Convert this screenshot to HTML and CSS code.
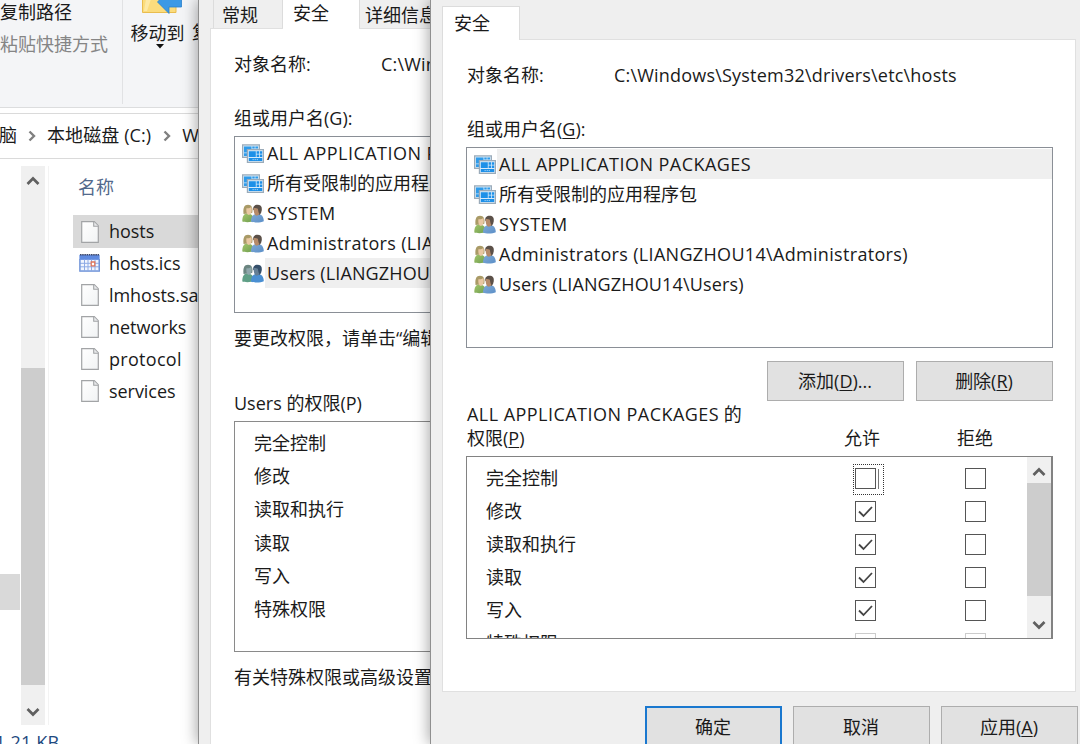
FILE: index.html
```html
<!DOCTYPE html>
<html lang="zh-CN">
<head>
<meta charset="utf-8">
<title>hosts 的权限</title>
<link rel="stylesheet" href="styles.css">
</head>
<body>
<svg width="0" height="0" class="defs">
  <defs>
    <linearGradient id="pg" x1="0" y1="0" x2="1" y2="1"><stop offset="0" stop-color="#fff"/><stop offset="1" stop-color="#f1f3f4"/></linearGradient>
    <linearGradient id="gr" x1="0" y1="0" x2="1" y2="1"><stop offset="0" stop-color="#a3c46a"/><stop offset="1" stop-color="#6f9f50"/></linearGradient>
    <linearGradient id="bl" x1="0" y1="0" x2="1" y2="1"><stop offset="0" stop-color="#7fa9d4"/><stop offset="1" stop-color="#5b8fc8"/></linearGradient>
  </defs>
  <symbol id="file" viewBox="0 0 18 22">
    <path d="M.7.7h12.6l4 4v16.6H.7z" fill="url(#pg)" stroke="#a2a4a6" stroke-width="1.2"/>
    <path d="M12.7 1v4.3H17" fill="#e8eaeb" stroke="#a2a4a6" stroke-width="1.1"/>
  </symbol>
  <symbol id="cal" viewBox="0 0 21 18">
    <path d="M.5 1h20v16.5H.5z" fill="#b9cdf2"/>
    <path d="M.5.8h20v5H.5z" fill="#5f8ae0"/>
    <path d="M1 .8h19" stroke="#3d4668" stroke-width="1.4" stroke-dasharray="1.5 .7"/>
    <path d="M2 6h17v10H2z" fill="#f1f5fe"/>
    <path d="M5.5 5.5v11M9 5.5v11M12.5 5.5v11M16 5.5v11M1 9.3h19M1 12.8h19" stroke="#8eabe5" stroke-width="1"/>
    <path d="M12.2 8h3.6v3.8h-3.6z" fill="#fff" stroke="#e0765a" stroke-width="1.3"/>
    <path d="M.8 5v12.2h19.6V5" fill="none" stroke="#7295d8" stroke-width="1.2"/>
  </symbol>
  <symbol id="pkg" viewBox="0 0 22 19">
    <path d="M.6.9h16.8v12.4H.6z" fill="#cfe6f8" stroke="#9babb9" stroke-width="1.2"/>
    <path d="M2 2.500h7.500v6H2zM2 9.300h5V12H2zM10.300 2.500h2.400v1.900h-2.400zM13.400 2.500h2.600v1.900h-2.600z" fill="#2f9bea"/>
    <path d="M5.4 5.6h16v12.7h-16z" fill="#d6eafa" stroke="#9babb9" stroke-width="1.2"/>
    <path d="M6.800 7.300h7v5.700h-7zM14.600 7.300h2.400v2.500h-2.400zM17.800 7.300h2.400v2.500h-2.400zM14.600 10.500H17V13h-2.400zM17.800 10.500h2.400V13h-2.400zM6.800 14h13.400v3.100H6.800z" fill="#1d90e8"/>
    <path d="M10.500 15.6h6" stroke="#b8dcf7" stroke-width=".8" stroke-dasharray="1.3 .8"/>
  </symbol>
  <symbol id="people" viewBox="0 0 22 19">
    <path d="M.3 17.500C.3 12 2 9.500 5.500 9.500s6.500 2 6.500 7.500c-2 1.300-9 1.500-11.700.5z" fill="url(#gr)"/>
    <path d="M1.500 10C.8 4 2.300.8 6 .8S11.200 4 10.200 9z" fill="#a99a66"/>
    <path d="M4.400 4.200c1.800.4 3.600-.2 5-1.200.8 3.600.3 7-2.400 8-2-.2-3-3.100-2.600-6.800z" fill="#e9c8a2"/>
    <path d="M9 17.600c0-4.600 2-7.600 6-7.600 4.700 0 6.800 2.600 6.800 7.200-3 1.700-9.800 1.800-12.800.4z" fill="url(#bl)"/>
    <path d="M11.200 5.500C10.800 2.200 12.800.7 15.500.7c3.200 0 4.800 1.900 4.200 5.700-.4 2.400-1.400 3.900-2.600 4.500z" fill="#5b5048"/>
    <path d="M11.700 4.200c1.500-.3 3 0 4.200.6.300 2 .6 3.800 1.400 5-.6 1.800-3.400 2.700-4.500.7-.9-1.700-1.300-4-1.100-6.300z" fill="#b58a69"/>
  </symbol>
  <symbol id="people-sel" viewBox="0 0 22 19">
    <path d="M.3 17.500C.3 12 2 9.500 5.500 9.500s6.500 2 6.500 7.500c-2 1.300-9 1.500-11.700.5z" fill="#5f9f86"/>
    <path d="M1.500 10C.8 4 2.300.8 6 .8S11.200 4 10.200 9z" fill="#6b8580"/>
    <path d="M4.400 4.200c1.800.4 3.600-.2 5-1.200.8 3.600.3 7-2.400 8-2-.2-3-3.100-2.600-6.800z" fill="#8fa7ab"/>
    <path d="M9 17.600c0-4.600 2-7.600 6-7.600 4.700 0 6.800 2.600 6.800 7.200-3 1.700-9.800 1.800-12.800.4z" fill="#4a8fd2"/>
    <path d="M11.200 5.500C10.800 2.200 12.800.7 15.500.7c3.200 0 4.800 1.900 4.200 5.700-.4 2.400-1.400 3.900-2.600 4.500z" fill="#35506b"/>
    <path d="M11.700 4.200c1.500-.3 3 0 4.200.6.300 2 .6 3.800 1.400 5-.6 1.800-3.400 2.700-4.500.7-.9-1.700-1.300-4-1.100-6.300z" fill="#647f96"/>
  </symbol>
  <symbol id="up" viewBox="0 0 14 10"><path d="M1.500 8 7 2.500 12.500 8" fill="none" stroke="#606060" stroke-width="2.700"/></symbol>
  <symbol id="down" viewBox="0 0 14 10"><path d="M1.500 2 7 7.500 12.500 2" fill="none" stroke="#606060" stroke-width="2.700"/></symbol>
  <symbol id="sep" viewBox="0 0 8 12"><path d="M1.500 1.500 6 6l-4.500 4.500" fill="none" stroke="#808080" stroke-width="2.400"/></symbol>
</svg>

<main class="desktop">
  <section class="explorer">
    <div class="ribbon">
      <div class="clip-group"><span>复制路径</span><span class="off">粘贴快捷方式</span></div>
      <div class="move-group">
        <svg class="move-icon" width="40" height="15" viewBox="0 0 40 15"><path d="M.5-1H34v13.500H.5z" fill="#fbdc7d" stroke="#e9bd4f"/><path d="M4-1h5L5 11H2z" fill="#fde9a5"/><path d="M15.500 2 27-10v4h12.500V7H27v6.500z" fill="#3b99e6" stroke="#2b80cc" stroke-width=".8"/></svg>
        <span>移动到</span>
        <svg width="8" height="5" viewBox="0 0 8 5"><path d="M0 0h8L4 4.500z" fill="#111"/></svg>
      </div>
      <span class="copy-to">复制到</span>
    </div>
    <div class="address"><span>脑</span><svg width="8" height="12"><use href="#sep"/></svg><span class="drive">本地磁盘 (C:)</span><svg width="8" height="12"><use href="#sep"/></svg><span>Windows</span></div>
    <div class="body">
      <div class="tree"><div class="tree-sel"></div></div>
      <div class="vbar tree-bar"><svg width="14" height="10"><use href="#up"/></svg><div class="thumb"></div><svg width="14" height="10"><use href="#down"/></svg></div>
      <div class="files">
        <div class="col-head">名称</div>
        <div class="file sel"><svg width="18" height="22"><use href="#file"/></svg><span>hosts</span></div>
        <div class="file"><svg class="wide" width="21" height="18"><use href="#cal"/></svg><span>hosts.ics</span></div>
        <div class="file"><svg width="18" height="22"><use href="#file"/></svg><span>lmhosts.sam</span></div>
        <div class="file"><svg width="18" height="22"><use href="#file"/></svg><span>networks</span></div>
        <div class="file"><svg width="18" height="22"><use href="#file"/></svg><span class="wider">protocol</span></div>
        <div class="file"><svg width="18" height="22"><use href="#file"/></svg><span>services</span></div>
      </div>
    </div>
    <div class="status"><span>1.21 KB</span></div>
  </section>

  <section class="win props">
    <div class="clip">
      <div class="tabs"><div class="tab">常规</div><div class="tab on">安全</div><div class="tab last">详细信息</div></div>
      <div class="page">
        <div class="object"><span>对象名称:</span><span class="path">C:\Windows</span></div>
        <div class="group-label">组或用户名(G):</div>
        <div class="list">
          <div class="item"><svg width="22" height="19"><use href="#pkg"/></svg><span class="caps">ALL APPLICATION PACKAGES</span></div>
          <div class="item"><svg width="22" height="19"><use href="#pkg"/></svg><span>所有受限制的应用程序包</span></div>
          <div class="item"><svg width="22" height="19"><use href="#people"/></svg><span class="caps">SYSTEM</span></div>
          <div class="item"><svg width="22" height="19"><use href="#people"/></svg><span class="name">Administrators (LIANGZHOU14)</span></div>
          <div class="item sel"><svg width="22" height="19"><use href="#people-sel"/></svg><span class="user">Users (LIANGZHOU14)</span></div>
        </div>
        <div class="hint">要更改权限，请单击“编辑”</div>
        <div class="perm-label">Users 的权限(P)</div>
        <div class="perms">
          <div>完全控制</div><div>修改</div><div>读取和执行</div><div>读取</div><div>写入</div><div>特殊权限</div>
        </div>
        <div class="advanced">有关特殊权限或高级设置</div>
      </div>
    </div>
  </section>

  <section class="win edit">
    <div class="tabs"><div class="tab on">安全</div></div>
    <div class="page">
      <div class="object"><span>对象名称:</span><span class="path">C:\Windows\System32\drivers\etc\hosts</span></div>
      <div class="group-label">组或用户名(<u>G</u>):</div>
      <div class="list">
        <div class="item sel"><svg width="22" height="19"><use href="#pkg"/></svg><span class="caps">ALL APPLICATION PACKAGES</span></div>
        <div class="item"><svg width="22" height="19"><use href="#pkg"/></svg><span>所有受限制的应用程序包</span></div>
        <div class="item"><svg width="22" height="19"><use href="#people"/></svg><span class="caps">SYSTEM</span></div>
        <div class="item"><svg width="22" height="19"><use href="#people"/></svg><span class="name">Administrators (LIANGZHOU14\Administrators)</span></div>
        <div class="item"><svg width="22" height="19"><use href="#people"/></svg><span class="user">Users (LIANGZHOU14\Users)</span></div>
      </div>
      <div class="actions"><div class="btn">添加(<u>D</u>)...</div><div class="btn">删除(<u>R</u>)</div></div>
      <div class="perm-head"><div class="who"><span class="caps">ALL APPLICATION PACKAGES</span> 的<br>权限(<u>P</u>)</div><div class="allow">允许</div><div class="deny">拒绝</div></div>
      <div class="perm-box">
        <div class="rows">
          <div class="row"><span>完全控制</span><i class="cb focus"></i><i class="cb"></i></div>
          <div class="row"><span>修改</span><i class="cb"><svg width="19" height="19"><path d="M3 9.500 7.500 14 16 5"/></svg></i><i class="cb"></i></div>
          <div class="row"><span>读取和执行</span><i class="cb"><svg width="19" height="19"><path d="M3 9.500 7.500 14 16 5"/></svg></i><i class="cb"></i></div>
          <div class="row"><span>读取</span><i class="cb"><svg width="19" height="19"><path d="M3 9.500 7.500 14 16 5"/></svg></i><i class="cb"></i></div>
          <div class="row"><span>写入</span><i class="cb"><svg width="19" height="19"><path d="M3 9.500 7.500 14 16 5"/></svg></i><i class="cb"></i></div>
          <div class="row"><span>特殊权限</span><i class="cb dim"></i><i class="cb dim"></i></div>
        </div>
        <div class="vbar"><svg width="14" height="10"><use href="#up"/></svg><div class="thumb"></div><svg width="14" height="10"><use href="#down"/></svg></div>
      </div>
    </div>
    <div class="footer"><div class="btn primary">确定</div><div class="btn">取消</div><div class="btn">应用(<u>A</u>)</div></div>
  </section>
</main>
</body>
</html>
```
FILE: styles.css
```css
* { box-sizing: border-box; }
body { margin: 0; width: 1080px; height: 747px; overflow: hidden; background: #fff; color: #1a1a1a;
  font: 18px/24px "Open Sans", "Noto Sans CJK SC", sans-serif; white-space: nowrap; }
svg { display: block; flex: none; }
.defs { position: absolute; }
u { text-decoration-thickness: 1px; text-underline-offset: 2px; }
.desktop { display: grid; grid-template-columns: 198px 232px 650px; height: 744px; overflow: hidden; }

/* Explorer */
.explorer { display: flex; flex-direction: column; overflow: hidden; min-width: 0; height: 744px; background: #fff; }
.ribbon { display: flex; height: 108px; flex: none; background: #f4f5f7; border-bottom: 1px solid #dcddde; }
.clip-group { display: flex; flex: none; flex-direction: column; gap: 8px; width: 123px; height: 104px; border-right: 1px solid #e1e2e4; }
.clip-group .off { color: #858585; }
.move-group { display: flex; flex: none; flex-direction: column; align-items: center; width: 69px; }
.move-group > .move-icon { margin-left: 9px; }
.move-group span { margin: 6px 0 0 0; }
.move-group > svg:last-child { margin: -1px 0 0 4px; }
.copy-to { flex: none; padding-top: 20px; }
.address { display: flex; align-items: center; height: 46px; flex: none; margin-top: 5px; border: solid #dadada; border-width: 1px 0; padding-bottom: 2px; }
.address span:first-child { margin-left: -1px; }
.address svg { margin: 1px 11px 0; }
.address .drive { letter-spacing: .1px; margin-right: 1px; }
.body { display: flex; height: 559px; flex: none; margin-top: 7px; }
.tree { width: 21px; padding-top: 408px; }
.tree-sel { width: 20px; height: 36px; background: #d9d9d9; }
.vbar { display: flex; flex: none; flex-direction: column; align-items: center; background: #f0f0f0; }
.thumb { width: 100%; flex: none; background: #cdcdcd; }
.tree-bar { width: 24px; padding: 10px 0 0; }
.tree-bar .thumb { height: 317px; margin: 182px 0 22px; }
.files { flex: 1; min-width: 0; margin-left: 3px; border-left: 1px solid #f3f3f3; padding-left: 24px; }
.col-head { height: 49px; padding: 9px 0 0 5px; color: #52698c; }
.file { display: flex; align-items: center; height: 32px; padding-left: 8px; gap: 10px; }
.file span { margin-top: -1px; letter-spacing: -.05px; }
.file .wider { letter-spacing: .3px; }
.file .wide { margin: 0 -1px 0 -2px; }
.file.sel { height: 33px; background: #d9d9d9; }
.file.sel + .file { margin-top: -1px; }
.status { height: 19px; margin-left: -5px; color: #1e4a80; line-height: 34px; letter-spacing: .2px; overflow: hidden; }

/* Dialog windows */
.win { position: relative; height: 744px; min-width: 0; background: #efefef; border-left: 1px solid #8f8f8f; box-shadow: -1px 0 14px rgba(0,0,0,.36); }
.clip { overflow: hidden; height: 744px; }
.tabs { display: flex; }
.tab { flex: none; border-right: 1px solid #dcdcdc; }
.page { background: #fff; border: 1px solid #e0e0e0; }
.object, .group-label { display: flex; height: 24px; }
.path { letter-spacing: .2px; }
.caps { letter-spacing: .46px; }
.name { letter-spacing: .32px; }
.user { letter-spacing: .14px; }
.list { border: 1px solid #8a8f96; padding: 1px 0; }
.item { display: flex; align-items: center; height: 30px; padding-left: 7px; }
.item span { flex: 1; height: 30px; line-height: 30px; margin-left: 1px; padding-left: 2px; }
.item.sel span { background: #efefef; }

.props .tabs { height: 28px; padding-left: 14px; }
.props .tab { width: 70px; height: 28px; border-left: 1px solid #dcdcdc; padding: 3px 0 0 8px; }
.props .tab.on { width: 76px; height: 30px; background: #fff; border: 0; padding: 1px 0 0 10px; z-index: 1; }
.props .tab.last { padding-left: 5px; width: 90px; }
.props .page { width: 500px; height: 730px; margin-left: 11px; padding: 23px 0 0 23px; }
.props .object span:first-child { width: 147px; }
.props .group-label { margin-top: 30px; }
.props .list { height: 177px; margin-top: 6px; }
.hint { margin-top: 13px; }
.perm-label { margin-top: 41px; }
.perms { height: 231px; margin-top: 6px; border: 1px solid #8a8a8a; padding: 5px 0 0 19px; line-height: 33.2px; }
.advanced { margin-top: 13px; }

.edit .tabs { height: 39px; padding: 6px 0 0 11px; }
.edit .tab { width: 78px; height: 34px; background: #fff; border: solid #dcdcdc; border-width: 1px 1px 0; padding: 4px 0 0 11px; z-index: 1; }
.edit .page { width: 634px; height: 653px; margin-left: 11px; padding: 23px 0 0 23px; }
.edit .object span:first-child { width: 147px; }
.edit .object, .edit .group-label { padding-left: 1px; }
.edit .group-label { margin-top: 30px; }
.edit .list { width: 587px; height: 201px; margin-top: 6px; }
.actions { display: flex; justify-content: flex-end; width: 587px; gap: 12px; margin-top: 13px; }
.btn { display: flex; align-items: center; justify-content: center; width: 137px; height: 41px; background: #e1e1e1; border: 1px solid #adadad; padding-right: 1px; white-space: pre; }
.actions .btn { height: 40px; }
.perm-head { display: flex; align-items: flex-end; height: 49px; padding-left: 1px; }
.who { width: 377px; }
.allow { width: 113px; }
.perm-box { display: flex; width: 587px; height: 183px; margin-top: 6px; border: 1px solid #828282; border-right-width: 2px; overflow: hidden; }
.rows { width: 560px; flex: none; padding-top: 5px; }
.row { display: flex; align-items: center; height: 33px; padding-left: 19px; }
.row span { width: 369px; flex: none; margin-top: -1px; }
.cb { width: 21px; height: 21px; flex: none; margin-right: 89px; border: 1px solid #555; background: #fff; }
.cb path { fill: none; stroke: #444; stroke-width: 1.800; }
.cb.dim { border-color: #ccc; }
.cb.focus { position: relative; }
.cb.focus::after { content: ""; position: absolute; top: -5px; left: -3px; width: 29px; height: 29px; border: 1px dotted #333; }
.cb.focus::before { content: ""; position: absolute; top: 0; left: 22px; height: 20px; border-left: 1px solid #777; }
.perm-box .vbar { width: 24px; padding: 10px 0 0; }
.perm-box .thumb { height: 113px; margin: 6px 0 24px; }
.footer { display: flex; gap: 11px; padding: 14px 0 0 214px; }
.footer .btn { flex: none; }
.primary { border: 2px solid #1a78cf; }
```
